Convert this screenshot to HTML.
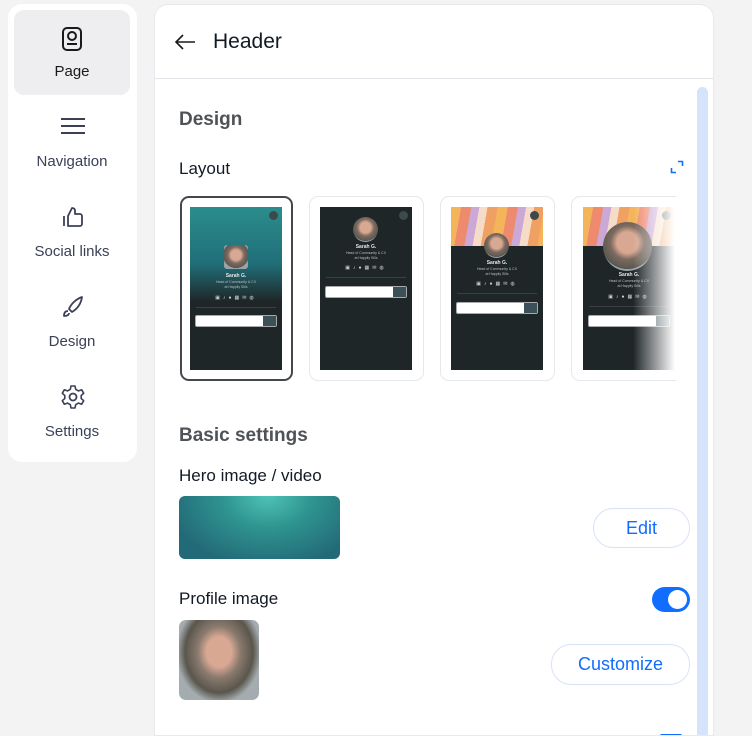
<!DOCTYPE html>
<html><head><meta charset="utf-8"><style>
*{box-sizing:border-box;margin:0;padding:0}
html,body{width:752px;height:736px;overflow:hidden}
body{background:#f3f3f3;font-family:"Liberation Sans",sans-serif;position:relative;color:#20303c}
.side{position:absolute;left:8px;top:4px;width:129px;height:458px;background:#fff;border-radius:14px}
.item{position:absolute;left:6px;width:116px;height:85px;text-align:center;font-size:15px;color:#3b4057}
.item svg{position:absolute;left:46px;top:14px}
.item span{position:absolute;left:0;right:0;top:53px}
.panel{position:absolute;left:154px;top:4px;width:560px;height:732px;background:#fff;border-radius:14px 14px 0 0;border:1px solid #e8e8ee;overflow:hidden}
.abs{position:absolute}
.card{position:absolute;top:191px;width:115px;height:185px;border:1px solid #e6e8ee;border-radius:9px;background:#fff}
.sel{border:2px solid #45474f;width:113px}
.ph{position:absolute;top:10px;width:92px;height:163px;background:#1f2628;overflow:hidden}
.av{position:absolute;border-radius:50%;background:radial-gradient(circle at 50% 42%,#d9a893 0 28%,#7c6a5f 45%,#595750 70%,#9aa3a8 71%);}
.nm{position:absolute;left:0;right:0;text-align:center;color:#e5e5e5;font-size:5px;font-weight:bold}
.sb{position:absolute;left:0;right:0;text-align:center;color:#bfbfbf;font-size:3.5px;line-height:5px}
.ic{position:absolute;left:0;right:0;text-align:center;color:#d0d0d0;font-size:5px;letter-spacing:3px}
.dv{position:absolute;left:6px;right:6px;height:1px;background:#394043}
.sr{position:absolute;left:5px;right:5px;height:12px;background:#fff;border:1px solid #aaa;border-radius:2px}
.sr i{position:absolute;right:0;top:0;width:13px;height:10px;background:#3c5157}
.cl{position:absolute;right:4px;top:4px;width:9px;height:9px;border-radius:50%;background:#3c4a4e}
.wave{position:absolute;left:0;top:0;width:92px;height:39px;background:repeating-linear-gradient(100deg,#f3b45a 0 10px,#ee8a6e 10px 20px,#cba8d6 20px 28px,#f5dcc8 28px 36px,#f0a062 36px 46px)}
.btn{position:absolute;border:1px solid #d6e3f7;border-radius:20px;color:#116dff;font-size:18px;text-align:center;background:#fff}
</style></head><body>
<div class="side">
 <div class="item" style="top:6px;background:#eeeef0;border-radius:10px;color:#1a1a1a">
  <svg width="24" height="26" viewBox="0 0 24 26" style="top:16px"><rect x="3" y="2" width="18" height="22" rx="4" fill="none" stroke="#1a1a1a" stroke-width="2"/><circle cx="12" cy="10" r="4" fill="none" stroke="#1a1a1a" stroke-width="2"/><line x1="7" y1="18" x2="17" y2="18" stroke="#1a1a1a" stroke-width="2"/></svg>
  <span>Page</span></div>
 <div class="item" style="top:96px"><svg width="26" height="24" viewBox="0 0 26 24"><path d="M1 5H25M1 12H25M1 19H25" stroke="#3b4057" stroke-width="2"/></svg><span>Navigation</span></div>
 <div class="item" style="top:186px"><svg width="26" height="26" viewBox="0 0 26 26"><path d="M4 12V22M8 12L12 4C14 4 15 5 15 7V10H20C21 10 22 11 22 12V20C22 21 21 22 20 22H8Z" fill="none" stroke="#3b4057" stroke-width="1.8" stroke-linejoin="round"/></svg><span>Social links</span></div>
 <div class="item" style="top:276px"><svg width="26" height="26" viewBox="0 0 26 26"><path d="M22 3C16 5 11 10 9 15L12 18C17 15 21 10 22 3ZM8 17C5 17 4 19 4 22C7 22 9 21 9 19" fill="none" stroke="#3b4057" stroke-width="1.8" stroke-linejoin="round"/></svg><span>Design</span></div>
 <div class="item" style="top:366px"><svg width="26" height="26" viewBox="0 0 26 26"><circle cx="13" cy="13" r="3.5" fill="none" stroke="#3b4057" stroke-width="1.8"/><path d="M11 2H15L15.7 5.3L18.5 6.9L21.7 5.8L23.7 9.3L21.2 11.5V14.5L23.7 16.7L21.7 20.2L18.5 19.1L15.7 20.7L15 24H11L10.3 20.7L7.5 19.1L4.3 20.2L2.3 16.7L4.8 14.5V11.5L2.3 9.3L4.3 5.8L7.5 6.9L10.3 5.3Z" fill="none" stroke="#3b4057" stroke-width="1.6" stroke-linejoin="round"/></svg><span>Settings</span></div>
</div>

<div class="panel">
 <svg class="abs" style="left:19px;top:28px" width="22" height="18" viewBox="0 0 22 18"><path d="M21 9H2M9 2L2 9L9 16" fill="none" stroke="#1a1a1a" stroke-width="1.6"/></svg>
 <div class="abs" style="left:58px;top:25px;font-size:21px;color:#121a26">Header</div>
 <div class="abs" style="left:0;right:0;top:73px;height:1px;background:#e2e4ea"></div>
 <div class="abs" style="left:24px;top:104px;font-size:19px;font-weight:bold;color:#4f5256">Design</div>
 <div class="abs" style="left:24px;top:154px;font-size:17px;color:#121a26">Layout</div>
 <svg class="abs" style="left:515px;top:155px" width="14" height="14" viewBox="0 0 14 14"><path d="M8 1.5H12.5V6M1.5 8V12.5H6" fill="none" stroke="#116dff" stroke-width="1.6"/></svg>

 <div class="card sel" style="left:25px"><div class="ph" style="left:8px;top:9px;background:linear-gradient(180deg,#2b8d8c 0,#206e78 35%,#1f2628 58%)">
  <div class="cl"></div><div class="av" style="left:34px;top:38px;width:24px;height:24px;border-radius:3px"></div>
  <div class="nm" style="top:66px">Sarah G.</div><div class="sb" style="top:73px">Head of Community &amp; CX<br>at Happily Sills</div>
  <div class="ic" style="top:88px">▣♪●▦✉◍</div><div class="dv" style="top:100px"></div><div class="sr" style="top:108px"><i></i></div></div></div>

 <div class="card" style="left:154px"><div class="ph" style="left:10px">
  <div class="cl"></div><div class="av" style="left:33px;top:10px;width:25px;height:25px"></div>
  <div class="nm" style="top:37px">Sarah G.</div><div class="sb" style="top:44px">Head of Community &amp; CX<br>at Happily Sills</div>
  <div class="ic" style="top:58px">▣♪●▦✉◍</div><div class="dv" style="top:70px"></div><div class="sr" style="top:79px"><i></i></div></div></div>

 <div class="card" style="left:285px"><div class="ph" style="left:10px">
  <div class="wave"></div><div class="cl"></div><div class="av" style="left:33px;top:26px;width:25px;height:25px"></div>
  <div class="nm" style="top:53px">Sarah G.</div><div class="sb" style="top:60px">Head of Community &amp; CX<br>at Happily Sills</div>
  <div class="ic" style="top:74px">▣♪●▦✉◍</div><div class="dv" style="top:86px"></div><div class="sr" style="top:95px"><i></i></div></div></div>

 <div class="abs" style="left:416px;top:185px;width:105px;height:200px;overflow:hidden">
 <div class="card" style="left:0;top:6px;width:130px"><div class="ph" style="left:11px">
  <div class="wave"></div><div class="cl"></div><div class="av" style="left:20px;top:15px;width:49px;height:49px"></div>
  <div class="nm" style="top:65px">Sarah G.</div><div class="sb" style="top:72px">Head of Community &amp; CX<br>at Happily Sills</div>
  <div class="ic" style="top:87px">▣♪●▦✉◍</div><div class="dv" style="top:99px"></div><div class="sr" style="top:108px"><i></i></div>
  <div class="abs" style="left:50px;top:0;width:42px;height:163px;background:linear-gradient(90deg,rgba(255,255,255,0),#fff)"></div></div></div>
 </div>

 <div class="abs" style="left:542px;top:82px;width:11px;height:660px;background:#d5e4fb;border-radius:6px"></div>

 <div class="abs" style="left:24px;top:420px;font-size:19px;font-weight:bold;color:#4f5256">Basic settings</div>
 <div class="abs" style="left:24px;top:461px;font-size:17px;color:#121a26">Hero image / video</div>
 <div class="abs" style="left:24px;top:491px;width:161px;height:63px;border-radius:6px;background:radial-gradient(ellipse at 55% 0,#4fc3b6 0,#2f9590 35%,#236a78 80%)"></div>
 <div class="btn" style="left:438px;top:503px;width:97px;height:40px;line-height:38px">Edit</div>
 <div class="abs" style="left:24px;top:584px;font-size:17px;color:#121a26">Profile image</div>
 <div class="abs" style="left:497px;top:582px;width:38px;height:25px;border-radius:13px;background:#116dff"><div class="abs" style="right:3px;top:3px;width:19px;height:19px;border-radius:50%;background:#fff"></div></div>
 <div class="abs" style="left:24px;top:615px;width:80px;height:80px;border-radius:7px;background:radial-gradient(ellipse at 50% 40%,#d9a893 0 22%,#8a7a6e 38%,#5a564c 60%,#a4acb0 75%)"></div>
 <div class="btn" style="left:396px;top:639px;width:139px;height:41px;line-height:39px">Customize</div>
 <div class="abs" style="left:504px;top:729px;width:24px;height:4px;border-radius:3px 3px 0 0;background:#116dff"></div>
</div>
</body></html>
